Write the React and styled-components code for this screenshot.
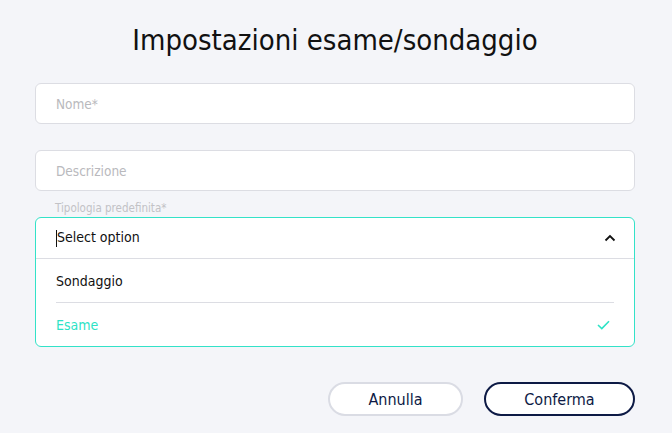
import React from 'react'
import styled, { createGlobalStyle } from 'styled-components'

const GlobalStyle = createGlobalStyle`
  body {
    margin: 0;
    background: #f4f5f9;
    font-family: "Liberation Sans Narrow", "DejaVu Sans Condensed", "Liberation Sans", sans-serif;
  }
`

const Wrapper = styled.section`
  padding: 18px 37px 0 35px;
  display: flex;
  flex-direction: column;
`

const Title = styled.h1`
  margin: 0 0 21px;
  font-size: 29px;
  line-height: 44px;
  font-weight: 400;
  color: #111;
  text-align: center;
`

const Input = styled.div`
  height: 39px;
  border: 1px solid #dcdde3;
  border-radius: 6px;
  background: #fff;
  padding-left: 20px;
  display: flex;
  align-items: center;
  font-size: 13.5px;
  color: #b9b9bd;
  margin-bottom: ${p => p.$gap || 0}px;
`

const Label = styled.div`
  margin: 10px 0 2px;
  font-size: 11.5px;
  line-height: 14px;
  color: #c2c2c6;
  padding-left: 20px;
`

const Select = styled.div`
  border: 1px solid #33e2c8;
  border-radius: 6px;
  background: #fff;
  display: flex;
  flex-direction: column;
`

const SelectHead = styled.div`
  height: 40px;
  border-bottom: 1px solid #dcdde3;
  display: flex;
  align-items: center;
  justify-content: space-between;
  padding: 0 18px 0 20px;
  font-size: 14px;
  color: #111;
`

const Caret = styled.span`
  display: inline-block;
  width: 1px;
  height: 17px;
  background: #111;
  vertical-align: middle;
`

const Options = styled.div`
  padding: 0 20px;
`

const Option = styled.div`
  height: 43px;
  display: flex;
  align-items: center;
  justify-content: space-between;
  font-size: 14px;
  color: ${p => (p.$selected ? '#2de3c6' : '#111')};
  border-top: ${p => (p.$divider ? '1px solid #dcdde3' : 'none')};
  padding-right: 4px;
`

const Actions = styled.div`
  margin-top: 35px;
  display: flex;
  justify-content: flex-end;
  gap: 21px;
`

const Button = styled.button`
  box-sizing: border-box;
  width: ${p => p.$w}px;
  height: 34px;
  border-radius: 17px;
  background: #fff;
  border: 2px solid ${p => (p.$primary ? '#0d1a45' : '#dadce4')};
  color: #0d1a45;
  font-family: inherit;
  font-size: 16px;
  cursor: pointer;
`

const App = () => {
  return (
    <>
      <GlobalStyle />
      <Wrapper>
        <Title>Impostazioni esame/sondaggio</Title>
        <Input $gap={26}>Nome*</Input>
        <Input>Descrizione</Input>
        <Label>Tipologia predefinita*</Label>
        <Select>
          <SelectHead>
            <span><Caret />Select option</span>
            <svg width="12" height="8" viewBox="0 0 12 8" fill="none">
              <path d="M1.5 6.5 L6 2 L10.5 6.5" stroke="#111" strokeWidth="1.8" />
            </svg>
          </SelectHead>
          <Options>
            <Option>Sondaggio</Option>
            <Option $divider $selected>
              Esame
              <svg width="13" height="10" viewBox="0 0 13 10" fill="none">
                <path d="M1 5 L4.8 8.6 L12 1.2" stroke="#2de3c6" strokeWidth="1.6" />
              </svg>
            </Option>
          </Options>
        </Select>
        <Actions>
          <Button $w={135}>Annulla</Button>
          <Button $w={151} $primary>Conferma</Button>
        </Actions>
      </Wrapper>
    </>
  )
}

export default App
